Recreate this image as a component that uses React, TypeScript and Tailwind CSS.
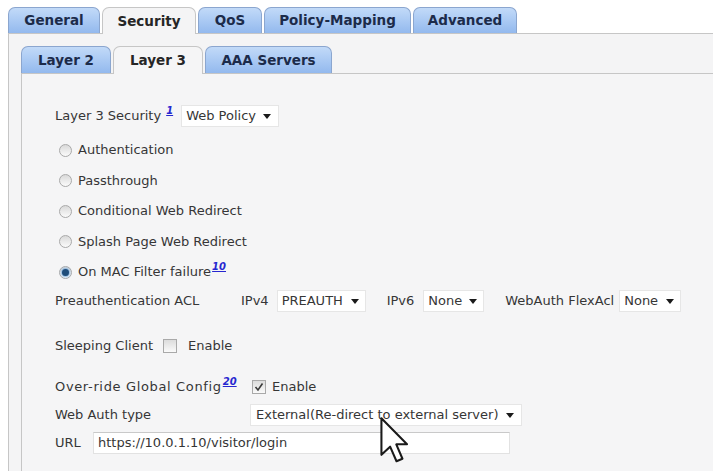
import React from "react";

const font = { fontFamily: '"DejaVu Sans", Verdana, sans-serif' };

function Caret() {
  return (
    <svg width="8" height="5" viewBox="0 0 8 5" className="shrink-0">
      <path d="M0 0 L8 0 L4 5 Z" fill="#1a1a1a" />
    </svg>
  );
}

function Sup({ n, spaced }: { n: string; spaced?: boolean }) {
  return (
    <span
      className={
        spaced
          ? "relative -top-[5px] ml-[5px] text-[10px] font-bold italic text-[#2626d0] underline leading-none tracking-normal"
          : "relative -top-[5px] ml-[1px] text-[10px] font-bold italic text-[#2626d0] underline leading-none tracking-normal"
      }
    >
      {n}
    </span>
  );
}

function Radio({ checked }: { checked?: boolean }) {
  return (
    <span className="w-[13px] h-[13px] rounded-full border border-[#a9a9a9] bg-linear-to-b from-[#d9d9d9] to-[#fbfbfb] flex items-center justify-center shrink-0">
      {checked ? (
        <span className="w-[7px] h-[7px] rounded-full bg-[#1f4d7a] shadow-[0_0_2px_1px_#7fb0df]" />
      ) : null}
    </span>
  );
}

function RadioRow({ label, checked, sup, tall }: { label: string; checked?: boolean; sup?: string; tall?: boolean }) {
  return (
    <div className={tall ? "h-[31px] flex items-center pl-[4px]" : "h-[30px] flex items-center pl-[4px]"}>
      <Radio checked={checked} />
      <span className="ml-[6px]">{label}</span>
      {sup ? <Sup n={sup} /> : null}
    </div>
  );
}

export default function App() {
  return (
    <div
      className="w-[713px] h-[471px] bg-white relative overflow-hidden flex flex-col text-[13px] text-[#363636]"
      style={font}
    >
      {/* outer tabs */}
      <div className="flex items-end pl-[8px] pt-[7px] gap-[2px] text-[13.5px] font-bold">
        <div className="w-[92px] h-[26px] rounded-t-[7px] border border-b-0 border-[#8ba6cf] bg-linear-to-b from-[#c2daf8] to-[#93b9ee] text-[#1c2b4a] flex items-center justify-center">
          General
        </div>
        <div className="w-[94px] h-[27px] -mb-px relative z-10 rounded-t-[7px] border border-b-0 border-[#c6c6c6] bg-[#f4f4f5] text-[#262626] flex items-center justify-center">
          Security
        </div>
        <div className="w-[64px] h-[26px] rounded-t-[7px] border border-b-0 border-[#8ba6cf] bg-linear-to-b from-[#c2daf8] to-[#93b9ee] text-[#1c2b4a] flex items-center justify-center">
          QoS
        </div>
        <div className="w-[147px] h-[26px] rounded-t-[7px] border border-b-0 border-[#8ba6cf] bg-linear-to-b from-[#c2daf8] to-[#93b9ee] text-[#1c2b4a] flex items-center justify-center">
          Policy-Mapping
        </div>
        <div className="w-[104px] h-[26px] rounded-t-[7px] border border-b-0 border-[#8ba6cf] bg-linear-to-b from-[#c2daf8] to-[#93b9ee] text-[#1c2b4a] flex items-center justify-center">
          Advanced
        </div>
      </div>

      {/* outer panel */}
      <div className="flex-1 ml-[8px] border-t border-l border-[#c6c6c6] bg-[#f4f4f5] pl-[12px] pt-[12px] flex flex-col">
        {/* inner tabs */}
        <div className="flex items-end gap-[2px] text-[13.5px] font-bold">
          <div className="w-[90px] h-[27px] rounded-t-[7px] border border-b-0 border-[#8ba6cf] bg-linear-to-b from-[#c2daf8] to-[#93b9ee] text-[#1c2b4a] flex items-center justify-center">
            Layer 2
          </div>
          <div className="w-[90px] h-[28px] -mb-px relative z-10 rounded-t-[7px] border border-b-0 border-[#c6c6c6] bg-[#f5f5f6] text-[#262626] flex items-center justify-center">
            Layer 3
          </div>
          <div className="w-[127px] h-[27px] rounded-t-[7px] border border-b-0 border-[#8ba6cf] bg-linear-to-b from-[#c2daf8] to-[#93b9ee] text-[#1c2b4a] flex items-center justify-center">
            AAA Servers
          </div>
        </div>

        {/* inner panel */}
        <div className="flex-1 border-t border-l border-[#c6c6c6] bg-[#f5f5f6] pl-[33px] pt-[31px] flex flex-col">
          <div className="h-[22px] flex items-center">
            <span>Layer 3 Security</span>
            <Sup n="1" spaced />
            <div className="ml-[8px] w-[98px] h-[22px] bg-white border border-[#e6e6e6] flex items-center justify-between pl-[4px] pr-[7px]">
              <span>Web Policy</span>
              <Caret />
            </div>
          </div>

          <div className="mt-[8px] flex flex-col">
            <RadioRow label="Authentication" />
            <RadioRow label="Passthrough" tall />
            <RadioRow label="Conditional Web Redirect" />
            <RadioRow label="Splash Page Web Redirect" tall />
            <RadioRow label="On MAC Filter failure" checked sup="10" />
          </div>

          <div className="mt-[3px] h-[22px] flex items-center">
            <span className="w-[186px]">Preauthentication ACL</span>
            <span>IPv4</span>
            <div className="ml-[8px] w-[89px] h-[22px] bg-white border border-[#e6e6e6] flex items-center justify-between pl-[4px] pr-[6px]">
              <span>PREAUTH</span>
              <Caret />
            </div>
            <span className="ml-[21px]">IPv6</span>
            <div className="ml-[9px] w-[61px] h-[22px] bg-white border border-[#e6e6e6] flex items-center justify-between pl-[4px] pr-[6px]">
              <span>None</span>
              <Caret />
            </div>
            <span className="ml-[21px]">WebAuth FlexAcl</span>
            <div className="ml-[5px] w-[62px] h-[22px] bg-white border border-[#e6e6e6] flex items-center justify-between pl-[4px] pr-[6px]">
              <span>None</span>
              <Caret />
            </div>
          </div>

          <div className="mt-[23px] h-[22px] flex items-center">
            <span>Sleeping Client</span>
            <span className="ml-[10px] w-[14px] h-[14px] border border-[#a9a9a9] bg-linear-to-b from-[#dcdcdc] to-[#fafafa]" />
            <span className="ml-[11px]">Enable</span>
          </div>

          <div className="mt-[19px] h-[22px] flex items-center">
            <span className="w-[197px] flex items-center">
              <span className="tracking-[0.65px]">Over-ride Global Config</span>
              <Sup n="20" />
            </span>
            <span className="w-[14px] h-[14px] border border-[#a9a9a9] bg-linear-to-b from-[#dcdcdc] to-[#fafafa] flex items-center justify-center">
              <svg width="10" height="10" viewBox="0 0 10 10">
                <path d="M1.5 5 L4 8 L8.5 1.5" fill="none" stroke="#3a3a3a" strokeWidth="1.6" />
              </svg>
            </span>
            <span className="ml-[6px]">Enable</span>
          </div>

          <div className="mt-[6px] h-[22px] flex items-center">
            <span className="w-[195px]">Web Auth type</span>
            <div className="w-[272px] h-[22px] bg-white border border-[#e6e6e6] flex items-center justify-between pl-[5px] pr-[7px]">
              <span>External(Re-direct to external server)</span>
              <Caret />
            </div>
          </div>

          <div className="mt-[6px] h-[22px] flex items-center">
            <span className="w-[38px]">URL</span>
            <div className="w-[417px] h-[22px] bg-white border border-[#e2e2e2] border-t-[#c9c9c9] flex items-center pl-[4px]">
              <span>https://10.0.1.10/visitor/login</span>
            </div>
          </div>
        </div>
      </div>

      {/* mouse cursor */}
      <svg
        className="absolute left-[379px] top-[416px] z-20"
        width="30"
        height="48"
        viewBox="0 0 13 21"
      >
        <path
          d="M1 1 L1 17 L4.8 13.4 L7.6 19.8 L10.2 18.7 L7.5 12.4 L12.2 12.4 Z"
          fill="#ffffff"
          stroke="#1a1a1a"
          strokeWidth="0.9"
          strokeLinejoin="round"
        />
      </svg>
    </div>
  );
}
